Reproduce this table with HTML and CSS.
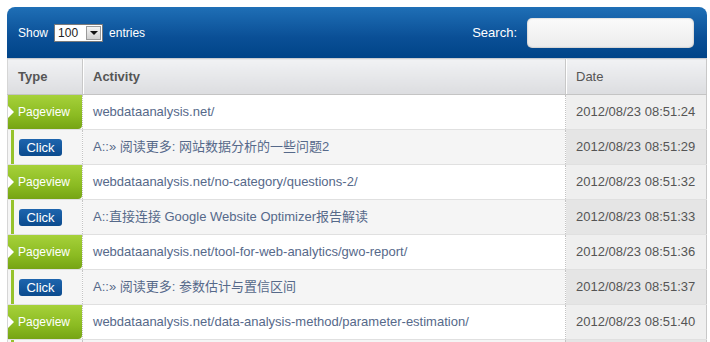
FILE: index.html
```html
<!DOCTYPE html>
<html>
<head>
<meta charset="utf-8">
<link rel="stylesheet" href="styles.css">
</head>
<body>
<div class="widget">
  <div class="topbar">
    <div class="length">
      <span>Show</span>
      <span class="select"><span class="sel-val">100</span><span class="sel-btn"><span class="arrow"></span></span></span>
      <span>entries</span>
    </div>
    <div class="search">
      <span>Search:</span>
      <span class="input"></span>
    </div>
  </div>
  <table class="grid">
    <thead>
      <tr><th class="c-type">Type</th><th class="c-act">Activity</th><th class="c-date">Date</th></tr>
    </thead>
    <tbody>
      <tr class="odd"><td class="t"><div class="pv">Pageview</div></td><td class="a">webdataanalysis.net/</td><td class="d">2012/08/23 08:51:24</td></tr>
      <tr class="even"><td class="t"><div class="ck"><span class="click">Click</span></div></td><td class="a">A::» 阅读更多: 网站数据分析的一些问题2</td><td class="d">2012/08/23 08:51:29</td></tr>
      <tr class="odd"><td class="t"><div class="pv">Pageview</div></td><td class="a">webdataanalysis.net/no-category/questions-2/</td><td class="d">2012/08/23 08:51:32</td></tr>
      <tr class="even"><td class="t"><div class="ck"><span class="click">Click</span></div></td><td class="a">A::直接连接 Google Website Optimizer报告解读</td><td class="d">2012/08/23 08:51:33</td></tr>
      <tr class="odd"><td class="t"><div class="pv">Pageview</div></td><td class="a">webdataanalysis.net/tool-for-web-analytics/gwo-report/</td><td class="d">2012/08/23 08:51:36</td></tr>
      <tr class="even"><td class="t"><div class="ck"><span class="click">Click</span></div></td><td class="a">A::» 阅读更多: 参数估计与置信区间</td><td class="d">2012/08/23 08:51:37</td></tr>
      <tr class="odd"><td class="t"><div class="pv">Pageview</div></td><td class="a">webdataanalysis.net/data-analysis-method/parameter-estimation/</td><td class="d">2012/08/23 08:51:40</td></tr>
      <tr class="even"><td class="t"><div class="ck"></div></td><td class="a"></td><td class="d"></td></tr>
    </tbody>
  </table>
</div>
</body>
</html>
```

FILE: styles.css
```css
html, body {
  margin: 0;
  padding: 0;
  background: #fff;
}
body {
  padding: 7px 3px 0 7px;
  font-family: "Liberation Sans", Arial, "Noto Sans CJK SC", sans-serif;
  overflow: hidden;
}
.widget {
  width: 700px;
}
.topbar {
  height: 51px;
  border-radius: 8px 8px 0 0;
  background: linear-gradient(#1f6fb6, #0a4f96 60%, #004488);
  display: flex;
  align-items: center;
  justify-content: space-between;
  padding: 0 13px 0 11px;
  box-sizing: border-box;
  color: #fff;
  font-size: 12px;
}
.length {
  display: flex;
  align-items: center;
  gap: 6px;
}
.select {
  display: inline-flex;
  align-items: stretch;
  height: 16px;
  border: 1px solid #7a7a7a;
  background: #fff;
  color: #222;
  width: 47px;
  box-sizing: content-box;
}
.sel-val {
  flex: 1;
  font-size: 12px;
  line-height: 16px;
  padding-left: 3px;
}
.sel-btn {
  width: 15px;
  margin: 1px;
  background: linear-gradient(#f4f4f4, #cfcfcf);
  border: 1px solid #9a9a9a;
  box-sizing: border-box;
  display: flex;
  align-items: center;
  justify-content: center;
}
.arrow {
  width: 0;
  height: 0;
  border-left: 4px solid transparent;
  border-right: 4px solid transparent;
  border-top: 4px solid #111;
  margin-top: 1px;
}
.search {
  display: flex;
  align-items: center;
  gap: 10px;
}
.search span:first-child {
  font-size: 13px;
}
.input {
  display: block;
  width: 167px;
  height: 30px;
  border-radius: 5px;
  background: linear-gradient(#fbfbfb, #ececec);
  box-shadow: inset 0 0 2px rgba(0,0,0,0.35);
}
.grid {
  width: 700px;
  border-collapse: collapse;
  table-layout: fixed;
  font-size: 13px;
  line-height: 16px;
  border-left: 1px solid #d6d6d6;
  border-right: 1px solid #c8c8c8;
}
.grid th {
  height: 36px;
  padding: 0 0 0 10px;
  text-align: left;
  color: #555;
  font-size: 13px;
  background: linear-gradient(#f1f2f4, #dcdde0);
  border-top: 1px solid #c9cbd0;
  border-bottom: 1px solid #c4c4c4;
  box-sizing: border-box;
}
.grid th + th {
  border-left: 1px solid #c8c8c8;
  box-shadow: inset 1px 0 0 #fff;
}
.c-type { width: 75px; }
.c-date { width: 141px; font-weight: normal; }
.grid td {
  height: 35px;
  padding: 0;
  box-sizing: border-box;
  border-bottom: 1px solid #e0e0e0;
  white-space: nowrap;
  overflow: hidden;
  vertical-align: middle;
}
.grid td.a {
  padding-left: 10px;
  color: #56698a;
  border-left: 1px dotted #c4c4c4;
}
.grid td.d {
  padding-left: 10px;
  color: #555;
  border-left: 1px dotted #c4c4c4;
}
.odd td.a, .odd td.t { background: #fff; }
.even td.a, .even td.t { background: #f5f5f5; }
.odd td.d { background: #efefef; }
.even td.d { background: #e5e5e5; }
.pv {
  position: relative;
  height: 34px;
  background: linear-gradient(#a6d13a, #8bbb22 60%, #76a414);
  border-radius: 0 0 4px 0;
  color: #fff;
  font-size: 12px;
  display: flex;
  align-items: center;
  padding-left: 10px;
}
.pv::before {
  content: "";
  position: absolute;
  left: 0;
  top: 11px;
  border-top: 6px solid transparent;
  border-bottom: 6px solid transparent;
  border-left: 6px solid #fff;
}
.ck {
  height: 34px;
  margin-left: 3px;
  border-left: 3px solid #96c22c;
  display: flex;
  align-items: center;
  padding-left: 5px;
}
.click {
  display: inline-block;
  width: 43px;
  height: 17px;
  line-height: 17px;
  text-align: center;
  color: #fff;
  font-size: 13px;
  border-radius: 3px;
  background: linear-gradient(#1e65ae, #0b4a8d);
}
```
